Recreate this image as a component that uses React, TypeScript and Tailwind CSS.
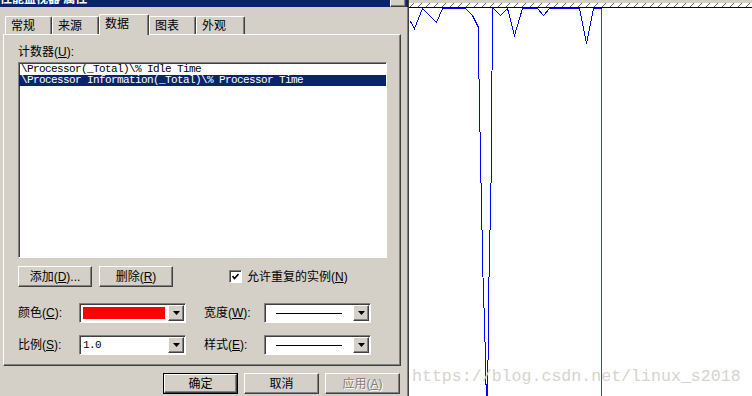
import React from "react";

const ui = "font-['Liberation_Sans','Noto_Sans_CJK_SC',sans-serif] text-[12px] text-black";
const mono = "font-['Liberation_Mono',monospace]";
const raised =
  "border border-t-white border-l-white border-r-[#404040] border-b-[#404040] shadow-[inset_-1px_-1px_0_#808080] bg-[#d4d0c8]";
const sunken =
  "border border-t-[#808080] border-l-[#808080] border-r-white border-b-white shadow-[inset_1px_1px_0_#404040] bg-white";

function Arrow() {
  return (
    <div className={`flex h-[16px] w-[16px] shrink-0 items-center justify-center ${raised}`}>
      <svg width="7" height="4" viewBox="0 0 7 4">
        <polygon points="0,0 7,0 3.5,4" fill="#000" />
      </svg>
    </div>
  );
}

function Combo({ children }: { children?: React.ReactNode }) {
  return (
    <div className={`flex h-[20px] w-[107px] items-center p-[1px] ${sunken}`}>
      <div className="flex flex-1 items-center">{children}</div>
      <Arrow />
    </div>
  );
}

function Btn({ label, wide = 74, def = false, off = false }: { label: React.ReactNode; wide?: number; def?: boolean; off?: boolean }) {
  const inner = (
    <div
      className={`flex h-full w-full items-center justify-center ${raised} ${
        off ? "text-[#808080] [text-shadow:1px_1px_0_#fff]" : ""
      }`}
    >
      {label}
    </div>
  );
  return (
    <div
      className={`h-[21px] ${def ? "border border-black" : ""}`}
      style={{ width: wide }}
    >
      {inner}
    </div>
  );
}

function Tab({ label, active = false, w }: { label: string; active?: boolean; w: number }) {
  return (
    <div
      className={`rounded-t-[2px] border-t border-l border-r border-t-white border-l-white border-r-[#404040] bg-[#d4d0c8] pl-[5px] leading-[14px] shadow-[inset_-1px_0_0_#808080] ${
        active ? "relative z-10 -mb-[1px] h-[21px] pt-[2px]" : "h-[18px] pt-[2px]"
      }`}
      style={{ width: w }}
    >
      {label}
    </div>
  );
}

const blue = [
  [1, 21], [5, 28], [13, 8], [27, 22], [33, 8], [56, 8], [63, 15], [69, 27], [69, 52],
  [70, 104], [71, 158], [74, 300], [75, 315], [76, 367], [77, 400], [78, 400], [78, 367],
  [79, 352], [79, 300], [82, 160], [82, 102], [83, 40], [83, 8], [84, 8], [91, 15],
  [98, 8], [105, 35], [113, 8], [128, 8], [134, 15], [140, 8], [170, 8], [177, 43],
  [184, 8], [192, 8],
];

export default function App() {
  return (
    <div className={`flex h-[396px] w-[752px] overflow-hidden bg-white ${ui}`}>
      {/* dialog */}
      <div className="flex w-[409px] shrink-0 flex-col border-r border-[#404040] bg-[#d4d0c8] shadow-[inset_-1px_0_0_#808080]">
        {/* title bar, mostly cut off */}
        <div className="flex h-[7px] items-end justify-between overflow-hidden bg-[#0a246a] pr-[2px]">
          <div className="h-[16px] shrink-0 font-bold leading-[16px] text-white">性能监视器 属性</div>
          <div className={`h-[14px] w-[16px] shrink-0 ${raised}`} />
        </div>

        {/* tabs */}
        <div className="mt-[7px] flex h-[20px] items-end pl-[5px]">
          <Tab label="常规" w={47} />
          <Tab label="来源" w={47} />
          <Tab label="数据" w={50} active />
          <Tab label="图表" w={47} />
          <Tab label="外观" w={49} />
        </div>

        {/* panel */}
        <div className="mx-[3px] flex h-[332px] w-[398px] flex-col border border-t-white border-l-white border-r-[#404040] border-b-[#404040] pl-[14px] pt-[10px] shadow-[inset_-1px_-1px_0_#808080]">
          <div className="h-[14px] leading-[14px]">
            计数器(<u>U</u>):
          </div>

          <div className={`mt-[3px] h-[196px] w-[369px] pt-[1px] ${sunken} ${mono} text-[11px] leading-[11px] tracking-[-0.6px]`}>
            <div className="h-[11px] whitespace-pre pl-[2px]">\Processor(_Total)\% Idle Time</div>
            <div className="h-[11px] whitespace-pre bg-[#0a246a] pl-[2px] text-white">
              \Processor Information(_Total)\% Processor Time
            </div>
          </div>

          <div className="mt-[8px] flex items-center">
            <Btn label={<span>添加(<u>D</u>)...</span>} />
            <div className="ml-[7px]">
              <Btn label={<span>删除(<u>R</u>)</span>} />
            </div>
            <div className={`ml-[56px] flex h-[13px] w-[13px] items-center justify-center ${sunken}`}>
              <svg width="7" height="7" viewBox="0 0 7 7">
                <polyline points="0.5,3 2.5,5.5 6.5,1" fill="none" stroke="#000" strokeWidth="1.6" />
              </svg>
            </div>
            <div className="ml-[5px]">
              允许重复的实例(<u>N</u>)
            </div>
          </div>

          <div className="mt-[16px] flex items-center">
            <div className="w-[61px]">
              颜色(<u>C</u>):
            </div>
            <Combo>
              <div className="ml-[2px] h-[12px] w-[82px] bg-[#ff0000]" />
            </Combo>
            <div className="ml-[18px] w-[60px]">
              宽度(<u>W</u>):
            </div>
            <Combo>
              <div className="ml-[10px] h-px w-[66px] bg-black" />
            </Combo>
          </div>

          <div className="mt-[12px] flex items-center">
            <div className="w-[61px]">
              比例(<u>S</u>):
            </div>
            <Combo>
              <span className={`ml-[2px] ${mono} text-[11px] tracking-[-0.6px]`}>1.0</span>
            </Combo>
            <div className="ml-[18px] w-[60px]">
              样式(<u>E</u>):
            </div>
            <Combo>
              <div className="ml-[10px] h-px w-[66px] bg-black" />
            </Combo>
          </div>
        </div>

        {/* dialog buttons */}
        <div className="mt-[7px] flex justify-end gap-[6px] pr-[8px]">
          <Btn label="确定" wide={75} def />
          <Btn label="取消" wide={75} />
          <Btn label={<span>应用(<u>A</u>)</span>} wide={75} off />
        </div>
      </div>

      {/* chart */}
      <div className="relative flex-1 overflow-hidden bg-white">
        <svg width="343" height="396" viewBox="0 0 343 396" shapeRendering="crispEdges" className="block">
          <rect x="0" y="0" width="343" height="3" fill="#d4d0c8" />
          {Array.from({ length: 44 }, (_, i) => (
            <line key={i} x1={1 + 8 * i} y1={7} x2={5 + 8 * i} y2={3} stroke="#606060" strokeWidth="1" />
          ))}
          <line x1="0" y1="7.5" x2="343" y2="7.5" stroke="#000" strokeWidth="1" />
          <line x1="192.5" y1="8" x2="192.5" y2="396" stroke="#ff0000" strokeWidth="1" />
          <polyline
            points={blue.map(([x, y]) => `${x + 0.5},${y + 0.5}`).join(" ")}
            fill="none"
            stroke="#0000ff"
            strokeWidth="1"
          />
        </svg>
        <div className={`absolute left-[3px] top-[367px] whitespace-pre text-[16.6px] leading-[20px] text-[#d7d4cf] ${mono}`}>
          https://blog.csdn.net/linux_s2018
        </div>
      </div>
    </div>
  );
}
